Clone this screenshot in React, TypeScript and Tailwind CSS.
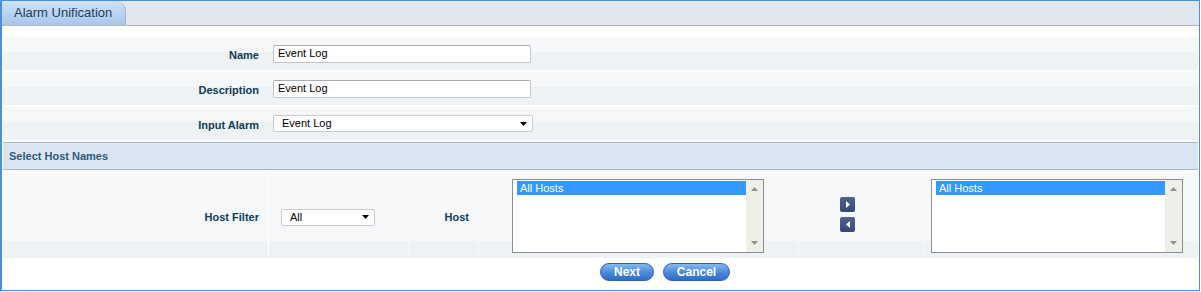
const FONT = "font-['Liberation_Sans',Arial,sans-serif]";

function Label({ text }: { text: string }) {
  return <span className="text-[11px] font-bold text-[#0f3c56]">{text}</span>;
}

function Caret() {
  return (
    <svg width="7" height="4" viewBox="0 0 7 4" className="shrink-0">
      <path d="M0 0h7L3.5 4z" fill="#000" />
    </svg>
  );
}

function TextBox({ value }: { value: string }) {
  return (
    <div className="flex h-[18px] w-[258px] items-center rounded-[2px] border border-[#c3c6cb] border-t-[#a9adb3] bg-white pl-[4px] text-[11px] text-black">
      {value}
    </div>
  );
}

function Dropdown({ value, width }: { value: string; width: string }) {
  return (
    <div
      className={`flex h-[17px] items-center justify-between rounded-[2px] border border-[#c8cbd0] bg-white pl-[8px] pr-[5px] text-[11px] text-black ${width}`}
    >
      <span>{value}</span>
      <Caret />
    </div>
  );
}

function FormRow({ label, children }: { label: string; children: React.ReactNode }) {
  return (
    <div className="mb-[2px] flex h-[33px] items-center bg-[linear-gradient(#f5f7f9_0%,#f5f7f9_46%,#eef2f5_46%,#eef2f5_100%)]">
      <div className="w-[265px] pr-[9px] text-right">
        <Label text={label} />
      </div>
      <div className="ml-[5px]">{children}</div>
    </div>
  );
}

function ListBox() {
  return (
    <div className="flex h-[74px] w-[252px] border border-[#8b8e93] bg-white">
      <div className="flex-1 pl-[4px] pt-px">
        <div className="flex h-[14px] items-center bg-[#3399ff] pl-[3px] text-[11px] text-white">All Hosts</div>
      </div>
      <div className="flex w-[17px] flex-col items-center justify-between bg-[#efefea] py-[7px]">
        <svg width="7" height="4" viewBox="0 0 7 4">
          <path d="M0 4h7L3.5 0z" fill="#8f8f8f" />
        </svg>
        <svg width="7" height="4" viewBox="0 0 7 4">
          <path d="M0 0h7L3.5 4z" fill="#8f8f8f" />
        </svg>
      </div>
    </div>
  );
}

function MoveButton({ dir }: { dir: 'right' | 'left' }) {
  return (
    <div className="flex h-[15px] w-[15px] items-center justify-center rounded-[2px] bg-[linear-gradient(#52648e,#364873)]">
      <svg width="4" height="7" viewBox="0 0 4 7">
        {dir === 'right' ? <path d="M0 0v7l4-3.5z" fill="#fff" /> : <path d="M4 0v7L0 3.5z" fill="#fff" />}
      </svg>
    </div>
  );
}

function PillButton({ text, width }: { text: string; width: string }) {
  return (
    <div
      className={`flex h-[18px] items-center justify-center rounded-full border border-[#2f64b3] bg-[linear-gradient(#86b8f2,#4a88da_55%,#2f6cc6)] text-[12px] font-bold text-white ${width}`}
    >
      {text}
    </div>
  );
}

const band = 'bg-[linear-gradient(transparent_0%,transparent_80%,#eef2f5_80%,#eef2f5_100%)]';

export default function App() {
  return (
    <div className={`h-[292px] w-[1201px] bg-white ${FONT}`}>
      <div className="flex h-[291px] w-[1200px] flex-col border border-l-2 border-[#4a8fdb]">
        {/* tab strip */}
        <div className="flex h-[25px] shrink-0 border-b border-[#b4b8bd] bg-[#e2e7ef]">
          <div className="flex w-[124px] items-center rounded-tl-[3px] rounded-tr-[10px] border-r border-[#9ab8dc] bg-[linear-gradient(#d0e1f5,#a7c7ec)] pl-[12px] text-[13px] text-[#213e60]">
            Alarm Unification
          </div>
        </div>

        <div className="px-px pt-[11px]">
          <FormRow label="Name">
            <TextBox value="Event Log" />
          </FormRow>
          <FormRow label="Description">
            <TextBox value="Event Log" />
          </FormRow>
          <FormRow label="Input Alarm">
            <Dropdown value="Event Log" width="w-[260px]" />
          </FormRow>
        </div>

        {/* section header */}
        <div className="mx-px flex h-[28px] items-center border-y border-[#a7b7cd] bg-[#dbe5f2] pl-[6px] text-[11px] font-bold text-[#2f5c7b]">
          Select Host Names
        </div>

        {/* host row */}
        <div className="mx-px mt-[3px] flex h-[85px]">
          <div className={`flex w-[265px] items-center justify-end bg-[#f5f7f9] pr-[9px] pt-[3px] ${band}`}>
            <Label text="Host Filter" />
          </div>
          <div className="w-px bg-white" />
          <div className="flex flex-1 gap-px bg-[#f5f7f9]">
            <div className={`flex w-[139px] items-center pl-[12px] pt-[3px] ${band}`}>
              <Dropdown value="All" width="w-[94px]" />
            </div>
            <div className={`flex w-[69px] items-center justify-end pr-[9px] pt-[3px] ${band}`}>
              <Label text="Host" />
            </div>
            <div className={`flex w-[319px] items-start pl-[33px] pt-[6px] ${band}`}>
              <ListBox />
            </div>
            <div className={`flex w-[125px] flex-col justify-center gap-[5px] pb-[2px] pl-[41px] ${band}`}>
              <MoveButton dir="right" />
              <MoveButton dir="left" />
            </div>
            <div className={`flex flex-1 items-start pl-[6px] pt-[6px] ${band}`}>
              <ListBox />
            </div>
          </div>
        </div>

        {/* actions */}
        <div className="flex gap-[9px] pl-[598px] pt-[5px]">
          <PillButton text="Next" width="w-[54px]" />
          <PillButton text="Cancel" width="w-[67px]" />
        </div>
      </div>
    </div>
  );
}
